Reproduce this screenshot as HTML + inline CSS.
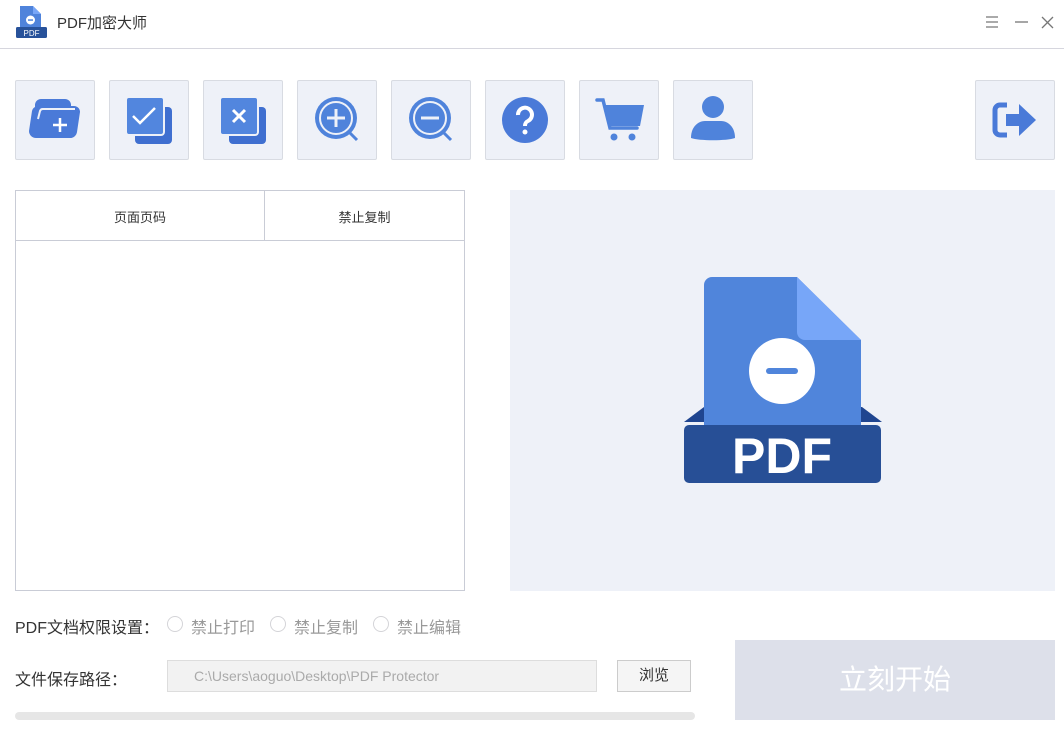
<!DOCTYPE html>
<html><head><meta charset="utf-8"><style>
body{margin:0;width:1064px;height:754px;background:#fff;position:relative;overflow:hidden;font-family:"Liberation Sans","Noto Sans CJK SC",sans-serif;}
.a{position:absolute}
.btn{position:absolute;top:80px;width:78px;height:78px;border:1px solid #d8dbe2;background:#eef1f8;border-radius:2px}
.btn svg{position:absolute;left:9px;top:9px}
.t{color:#333;font-size:16px}
.radio{position:absolute;width:14px;height:14px;border:1px solid #d4d4d8;border-radius:50%;top:616px}
</style></head><body>
<svg class="a" style="left:15px;top:5px" width="34" height="34" viewBox="0 0 34 34">
<path d="M5 1h13l8 8v18H5z" fill="#4f83db"/><path d="M18 1l8 8h-8z" fill="#78a6f7"/>
<circle cx="15.5" cy="15" r="4.5" fill="#fff"/><rect x="13" y="14.3" width="5" height="1.5" fill="#4f83db"/>
<rect x="1" y="22" width="31" height="11" rx="1.5" fill="#28529a"/>
<text x="16.5" y="31" font-size="8" fill="#fff" text-anchor="middle" font-family="Liberation Sans">PDF</text></svg>
<div class="a" style="left:57px;top:12px;font-size:15px;color:#333">PDF加密大师</div>
<svg class="a" style="left:984px;top:14px" width="72" height="18"><g stroke="#777" stroke-width="1.3" fill="none">
<path d="M2 3h12M2 8h12M2 13h12"/><path d="M31 8h13"/><path d="M58 3l11 11M69 3l-11 11"/></g></svg>
<div class="a" style="left:0;top:48px;width:1064px;height:1px;background:#d6d6de"></div>

<div class="btn" style="left:15px"><svg width="60" height="60" viewBox="0 0 60 60"><path d="M10 15a6 6 0 0 1 6-6h24a6 6 0 0 1 6 6v1h3a6 6 0 0 1 6 6l-3 20a7 7 0 0 1-7 6H11a7 7 0 0 1-7-7l3-20a6 6 0 0 1 3-4z" fill="#4a7ad8"/><path d="M13 29l2-8a3 3 0 0 1 3-2h32" stroke="#eef1f8" stroke-width="2" fill="none"/><path d="M35 28v14M28 35h14" stroke="#fff" stroke-width="2.5"/></svg></div>
<div class="btn" style="left:109px"><svg width="60" height="60" viewBox="0 0 60 60"><rect x="16" y="17" width="37" height="37" rx="4" fill="#3f6fd0"/><rect x="7" y="7" width="38" height="38" rx="3" fill="#5286de" stroke="#eef1f8" stroke-width="2"/><path d="M14 26l7 7 15-15" stroke="#fff" stroke-width="2.5" fill="none"/></svg></div>
<div class="btn" style="left:203px"><svg width="60" height="60" viewBox="0 0 60 60"><rect x="16" y="17" width="37" height="37" rx="4" fill="#3f6fd0"/><rect x="7" y="7" width="38" height="38" rx="3" fill="#5286de" stroke="#eef1f8" stroke-width="2"/><path d="M20 20l12 12M32 20l-12 12" stroke="#fff" stroke-width="3"/></svg></div>
<div class="btn" style="left:297px"><svg width="60" height="60" viewBox="0 0 60 60"><circle cx="29" cy="28" r="21" fill="#4f83db"/><circle cx="29" cy="28" r="16" fill="none" stroke="#eef1f8" stroke-width="2"/><path d="M29 19v18M20 28h18" stroke="#eef1f8" stroke-width="3"/><path d="M43 43l7 7" stroke="#4f83db" stroke-width="3"/></svg></div>
<div class="btn" style="left:391px"><svg width="60" height="60" viewBox="0 0 60 60"><circle cx="29" cy="28" r="21" fill="#4f83db"/><circle cx="29" cy="28" r="16" fill="none" stroke="#eef1f8" stroke-width="2"/><path d="M20 28h18" stroke="#eef1f8" stroke-width="3"/><path d="M43 43l7 7" stroke="#4f83db" stroke-width="3"/></svg></div>
<div class="btn" style="left:485px"><svg width="60" height="60" viewBox="0 0 60 60"><circle cx="30" cy="30" r="23" fill="#4a7ad8"/><path d="M23 25a7 7 0 1 1 10 6c-2 1-3 2-3 5" stroke="#fff" stroke-width="4" fill="none"/><circle cx="30" cy="42" r="2.5" fill="#fff"/></svg></div>
<div class="btn" style="left:579px"><svg width="60" height="60" viewBox="0 0 60 60"><path d="M8 10h6l7 28h27" stroke="#4f83db" stroke-width="3.5" fill="none" stroke-linecap="round"/><path d="M15 15h40l-4 21H20z" fill="#4f83db"/><circle cx="25" cy="47" r="3.5" fill="#4f83db"/><circle cx="43" cy="47" r="3.5" fill="#4f83db"/></svg></div>
<div class="btn" style="left:673px"><svg width="60" height="60" viewBox="0 0 60 60"><circle cx="30" cy="17" r="11" fill="#4f83db"/><path d="M8 48c0-12 8-17 14-17h16c6 0 14 5 14 17c-8 3-36 3-44 0z" fill="#4f83db"/></svg></div>
<div class="btn" style="left:975px"><svg width="60" height="60" viewBox="0 0 60 60"><path d="M22 15h-7a5 5 0 0 0-5 5v20a5 5 0 0 0 5 5h7" stroke="#4a7ad8" stroke-width="5" fill="none"/><path d="M21 24h13v-10l17 16-17 16v-10H21z" fill="#4a7ad8"/></svg></div>

<div class="a" style="left:15px;top:190px;width:448px;height:399px;border:1px solid #c9ccd6"></div>
<div class="a" style="left:16px;top:240px;width:448px;height:1px;background:#c9ccd6"></div>
<div class="a" style="left:264px;top:191px;width:1px;height:49px;background:#c9ccd6"></div>
<div class="a" style="left:16px;top:207px;width:248px;text-align:center;font-size:13px;color:#333">页面页码</div>
<div class="a" style="left:265px;top:207px;width:199px;text-align:center;font-size:13px;color:#333">禁止复制</div>

<div class="a" style="left:510px;top:190px;width:545px;height:401px;background:#eef1f8"></div>
<svg class="a" style="left:680px;top:275px" width="206" height="214" viewBox="0 0 206 214">
<path d="M4 147l20-15h158l20 15z" fill="#1f4590"/>
<path d="M32 2h85l64 63v85H24V10a8 8 0 0 1 8-8z" fill="#5085db"/>
<path d="M117 2l64 63h-56a8 8 0 0 1-8-8z" fill="#77a6f8"/>
<circle cx="102" cy="96" r="33" fill="#fff"/><rect x="86" y="93" width="32" height="6" rx="3" fill="#5085db"/>
<rect x="4" y="150" width="197" height="58" rx="5" fill="#274f96"/>
<text x="102" y="198" font-size="50" font-weight="bold" fill="#fff" text-anchor="middle" font-family="Liberation Sans">PDF</text></svg>

<div class="a t" style="left:15px;top:614px">PDF文档权限设置：</div>
<div class="radio" style="left:167px"></div><div class="a" style="left:191px;top:614px;font-size:16px;color:#999">禁止打印</div>
<div class="radio" style="left:270px"></div><div class="a" style="left:294px;top:614px;font-size:16px;color:#999">禁止复制</div>
<div class="radio" style="left:373px"></div><div class="a" style="left:397px;top:614px;font-size:16px;color:#999">禁止编辑</div>
<div class="a t" style="left:15px;top:666px">文件保存路径：</div>
<div class="a" style="left:167px;top:660px;width:428px;height:30px;border:1px solid #ddd;background:#f2f2f2;font-size:14px;color:#aaa;line-height:30px;text-indent:26px">C:\Users\aoguo\Desktop\PDF Protector</div>
<div class="a" style="left:617px;top:660px;width:72px;height:30px;border:1px solid #ccc;background:#f5f5f5;text-align:center;line-height:30px;font-size:15px;color:#333">浏览</div>
<div class="a" style="left:15px;top:712px;width:680px;height:8px;border-radius:4px;background:#e6e6e6"></div>
<div class="a" style="left:735px;top:640px;width:320px;height:80px;background:#dde0ea;color:#fff;font-size:28px;text-align:center;line-height:80px">立刻开始</div>
</body></html>
